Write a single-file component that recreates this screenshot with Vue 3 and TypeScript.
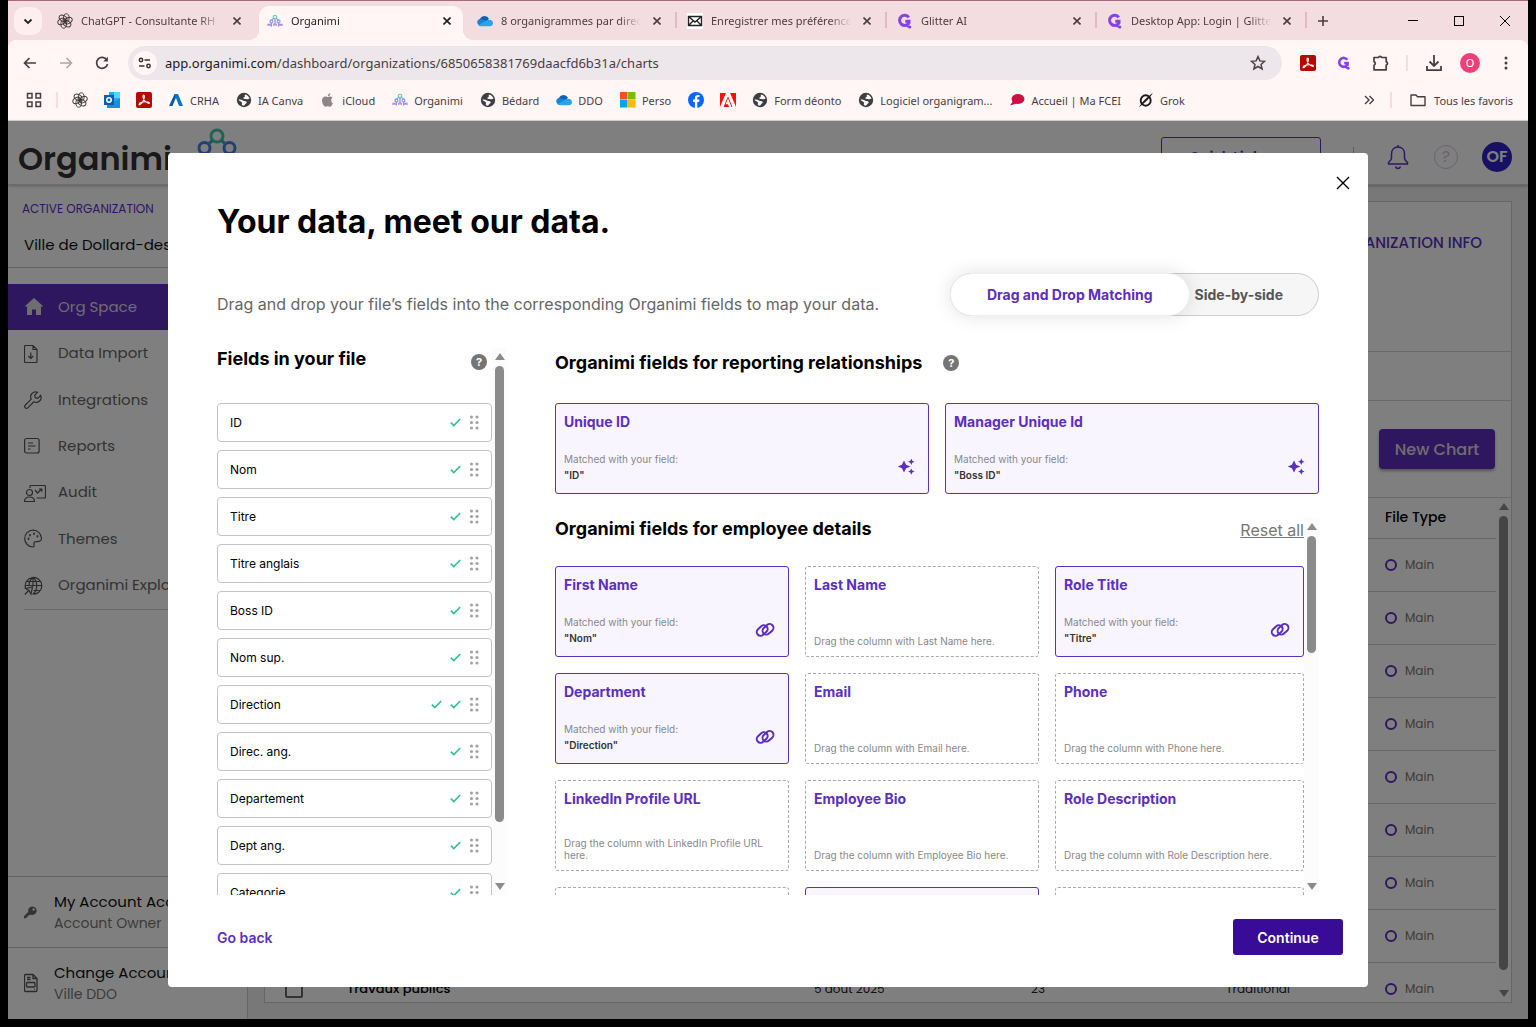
<script setup lang="ts">
interface Tab { icon: string; title: string; active?: boolean }
interface Bookmark { icon: string; label?: string }
interface NavItem { icon: string; label: string; active?: boolean }
interface FileField { name: string; checks: number }
interface TargetField { title: string; match?: string }
interface ChartRow { name: string; date: string; people: string; kind: string }

const icons: Record<string, string> = {
  gpt: '<g fill="none" stroke="#3a3335" stroke-width=".9"><ellipse cx="9.300" cy="5" rx="2.800" ry="4.200"/><ellipse cx="9.300" cy="5" rx="2.800" ry="4.200" transform="rotate(60 8 8)"/><ellipse cx="9.300" cy="5" rx="2.800" ry="4.200" transform="rotate(120 8 8)"/><ellipse cx="9.300" cy="5" rx="2.800" ry="4.200" transform="rotate(180 8 8)"/><ellipse cx="9.300" cy="5" rx="2.800" ry="4.200" transform="rotate(240 8 8)"/><ellipse cx="9.300" cy="5" rx="2.800" ry="4.200" transform="rotate(300 8 8)"/></g>',
  organimi: '<g fill="none" stroke-width="1.3"><circle cx="8" cy="4" r="1.7" stroke="#6fcfc4"/><path d="M6.6 5.2L5 7.4M9.4 5.2L11 7.4" stroke="#6fb0dc"/><circle cx="4.4" cy="8.4" r="1.4" stroke="#86a4e6"/><circle cx="11.6" cy="8.4" r="1.4" stroke="#86a4e6"/><path d="M8 5.8V11M4.4 10v2.600M11.600 10v2.600M1 13v-1.500h2V13M6.800 13v-1.800h2.400V13M13 13v-1.500h2V13M4 13h1M11 13h1" stroke="#b08ae6"/></g>',
  cloud: '<path d="M4.500 13A4 4 0 0 1 3 5.700 5 5 0 0 1 12 5.800L9 9z" fill="#0f5fb4"/><path d="M12.300 13H4A3.800 3.800 0 0 1 .8 7.300C2 6 5 5.800 7 7l5 1.500z" fill="#1484d8"/><path d="M4 13.200a3.200 3.200 0 0 1-2.500-1.200l6-3.200c2-1.300 3-2 4.700-2 2.300.2 3.800 1.500 3.800 3.400s-1.500 3-3.200 3z" fill="#28a4ea"/>',
  mail: '<path fill="#fff" d="M0 0h16v16H0z"/><path d="M1.500 3.500h13v9h-13zM1.500 3.500L8 9l6.500-5.500M1.500 12.500L6 8M14.500 12.500L10 8" fill="none" stroke="#222" stroke-width="1.400"/>',
  glitter: '<path d="M11.800 4.300A5.100 5.100 0 1 0 12 10V8.200H8.300" fill="none" stroke="#8444e0" stroke-width="3"/><circle cx="12.800" cy="14" r="1.600" fill="#8444e0"/><path d="M9 12.500l3.500 1.700" stroke="#8444e0" stroke-width="2"/>',
  outlook: '<path fill="#28a8ea" d="M5 0h11v12H5z"/><path fill="#50d9ff" d="M10 0h6v6h-6z"/><path fill="#0f6cbd" d="M5 6h5v6H5z"/><path fill="#1490df" d="M3 12l13-5v9H3z"/><path fill="#0a5fab" d="M0 3h10v10H0z"/><circle cx="5" cy="8" r="2.200" fill="none" stroke="#fff" stroke-width="1.500"/>',
  pdf: '<rect width="16" height="16" rx="2" fill="#b30b00"/><path d="M3 12.300c0-1.500 4-3 9-2.300 2 .4 1.800 1.700.4 1.300C9.500 10.500 6.500 7 7 4c.3-1.400 1.700-1 1.400.7C8 8 5.500 11.500 4 12.600c-.6.300-1 .2-1-.3z" fill="none" stroke="#fff" stroke-width="1.100"/>',
  crha: '<path fill="#fff" d="M0 0h16v16H0z"/><path d="M1 14L6.500 2h3l-5 12z" fill="#0d5aa8"/><path d="M6.500 2h3.500l5 12h-4z" fill="#0b76c8"/>',
  globe: '<circle cx="8" cy="8" r="7.200" fill="#3c4043"/><path d="M9 2.400c2.300.4 4 2 4.500 4.200-1 .8-2 .9-3 .6-.9-.3-1.600.2-2.500-.4C7 6.200 7 5.600 8.300 5.200 9.400 4.700 8.300 3.500 9 2.400zM2.500 7.500c1.700-.2 3.200 0 4.500 1 1 .8 2.500.300 3.500 1.200.8 1-.300 1.600-1 2.100-.8.600-.5 1.400-1.500 1.800-1.200.2-2-.2-2.200-1.100-.1-.8.500-1.100.1-2C5.400 9.400 3.300 9.500 2.500 7.500z" fill="#fff6f5"/>',
  apple: '<path d="M11.200 8.300c0-1.600 1.300-2.400 1.400-2.500-.8-1.100-2-1.300-2.400-1.300-1-.1-2 .6-2.500.6s-1.300-.6-2.200-.6C3.200 4.600 2 6.200 2 8.600c0 2.700 1.900 6.200 3.500 6.200.8 0 1.200-.5 2.200-.5s1.300.5 2.200.5c1.300 0 2.500-2.200 2.900-3.500-1-.4-1.600-1.500-1.600-3zM9.600 3.500c.5-.6.800-1.400.7-2.300-1.300.2-2.600 1.300-2.500 2.900.7 0 1.400-.2 1.800-.6z" fill="#8c8889"/>',
  windows: '<path fill="#f25022" d="M0 0h7.500v7.500H0z"/><path fill="#7fba00" d="M8 0h7.500v7.500H8z"/><path fill="#00a4ef" d="M0 8h7.500v7.500H0z"/><path fill="#ffb900" d="M8 8h7.500v7.500H8z"/>',
  facebook: '<circle cx="8" cy="8" r="8" fill="#0866ff"/><path d="M6.900 16V10H5V7.600h1.900V6.300c0-2.300 1.100-3.300 3.400-3.300.5 0 1 .1 1.200.1v2h-.9c-1 0-1.300.4-1.300 1.400v1.100h2.200L11.100 10H9.300v6z" fill="#fff"/>',
  adobe: '<path fill="#fa0f00" d="M0 1h16v14H0z"/><path fill="#fff" d="M5.900 1h4.200L16 15h-3.500L8 4.300 3.500 15H0zM8 6.200l3.500 8.800H9l-1-2.700H5.600z"/>',
  fcei: '<path fill="#fff" d="M0 0h16v16H0z"/><ellipse cx="9" cy="7" rx="6.500" ry="5" fill="#cf1044"/><path d="M4 9l-3 4.500 7-2z" fill="#cf1044"/>',
  grok: '<ellipse cx="7.700" cy="8.500" rx="5" ry="5.200" fill="none" stroke="#1b1b1b" stroke-width="1.900"/><path d="M.8 15.500C4 10 8 6 15 .8 12 6 7.500 10.500.8 15.500z" fill="#1b1b1b"/>',
  home: '<path d="M10 1L.5 9.500H3V18h5v-5.500h4V18h5V9.500h2.500z" fill="#ddd" stroke="none"/>',
  import: '<path d="M1.500 1.500H9l4 4v12a1 1 0 0 1-1 1H1.500a1 1 0 0 1-1-1v-15a1 1 0 0 1 1-1zM9 1.500v4h4M6.800 8.500v6M4.300 12l2.500 2.500 2.500-2.500"/>',
  wrench: '<path d="M1.200 17.800a1.800 1.800 0 0 1 0-2.600l6-6a5 5 0 0 1 6.400-6.900l-2.900 2.900.6 2.500 2.500.6 2.900-2.900a5 5 0 0 1-6.900 6.400l-6 6a1.800 1.800 0 0 1-2.600 0z"/>',
  report: '<rect x=".6" y="2.500" width="14.500" height="14.500" rx="2"/><path d="M4 7h4M4 10h7.500M4 13h2.500M8 7h1"/>',
  audit: '<circle cx="5.500" cy="9.500" r="3"/><path d="M.5 18.500c0-3 2-4.500 5-4.500s5 1.500 5 4.500zM6 5V3.500a1 1 0 0 1 1-1h13.500a1 1 0 0 1 1 1V14a1 1 0 0 1-1 1h-8M11 7l2.500 3 4-4M15 6h2.800v2.800"/>',
  palette: '<path d="M17.500 9.500A8.400 8.400 0 1 0 9 18c1.300 0 1.300-1.500 1-2.500-.500-2 .500-3 2.500-3 2.500.3 5-.5 5-3z"/><path d="M4.500 9.500v.5M6 6v.5M10 4.500V5M13.500 7v.5" stroke-width="1.800" stroke-linecap="round"/>',
  explore: '<path d="M1.500 12a8.300 8.300 0 1 1 7 6M1 9.500h16.500M2.500 5.500h13.500M9.500 14.500h6.500M9 1.300v9M9 1.300c-3 2.500-4 5-4 8.200M9 1.300c5 4 5 13 0 16.700M.8 18.500l4-4M1.500 12.500l7-1.500-1.500 7-2-3.500z"/>',
  key: '<path d="M12.300 4a5 5 0 0 0-4.800 6.400L2 15.900V18h3.200v-1.600h1.600v-1.600h1.600l1.400-1.400A5 5 0 1 0 12.300 4zm1.400 5a1.400 1.400 0 1 1 0-2.800 1.400 1.400 0 0 1 0 2.800z" transform="translate(-2 1) scale(.85)" fill="#666" stroke="none"/>',
  account: '<path d="M1.500 1.500H9l4 4v12a1 1 0 0 1-1 1H1.500a1 1 0 0 1-1-1v-15a1 1 0 0 1 1-1zM9 1.500v4h4M3 4.500h3.500M3 6.500h3.500M10 16.300h.8"/><rect x="2.500" y="9.500" width="8.500" height="4.500" rx="1"/>',
}

const tabs: Tab[] = [
  { icon: 'gpt', title: 'ChatGPT - Consultante RH' },
  { icon: 'organimi', title: 'Organimi', active: true },
  { icon: 'cloud', title: '8 organigrammes par direc' },
  { icon: 'mail', title: 'Enregistrer mes préférence' },
  { icon: 'glitter', title: 'Glitter AI' },
  { icon: 'glitter', title: 'Desktop App: Login | Glitte' },
]

const bookmarks: Bookmark[] = [
  { icon: 'gpt' },
  { icon: 'outlook' },
  { icon: 'pdf' },
  { icon: 'crha', label: 'CRHA' },
  { icon: 'globe', label: 'IA Canva' },
  { icon: 'apple', label: 'iCloud' },
  { icon: 'organimi', label: 'Organimi' },
  { icon: 'globe', label: 'Bédard' },
  { icon: 'cloud', label: 'DDO' },
  { icon: 'windows', label: 'Perso' },
  { icon: 'facebook' },
  { icon: 'adobe' },
  { icon: 'globe', label: 'Form déonto' },
  { icon: 'globe', label: 'Logiciel organigram...' },
  { icon: 'fcei', label: 'Accueil | Ma FCEI' },
  { icon: 'grok', label: 'Grok' },
]

const nav: NavItem[] = [
  { icon: 'home', label: 'Org Space', active: true },
  { icon: 'import', label: 'Data Import' },
  { icon: 'wrench', label: 'Integrations' },
  { icon: 'report', label: 'Reports' },
  { icon: 'audit', label: 'Audit' },
  { icon: 'palette', label: 'Themes' },
  { icon: 'explore', label: 'Organimi Explore' },
]

const blank: ChartRow = { name: '', date: '', people: '', kind: '' }
const rows: ChartRow[] = [
  ...Array.from({ length: 8 }, () => blank),
  { name: 'Travaux publics', date: '5 août 2025', people: '23', kind: 'Traditional' },
]

const fileFields: FileField[] = [
  { name: 'ID', checks: 1 },
  { name: 'Nom', checks: 1 },
  { name: 'Titre', checks: 1 },
  { name: 'Titre anglais', checks: 1 },
  { name: 'Boss ID', checks: 1 },
  { name: 'Nom sup.', checks: 1 },
  { name: 'Direction', checks: 2 },
  { name: 'Direc. ang.', checks: 1 },
  { name: 'Departement', checks: 1 },
  { name: 'Dept ang.', checks: 1 },
  { name: 'Categorie', checks: 1 },
]

const reporting: TargetField[] = [
  { title: 'Unique ID', match: 'ID' },
  { title: 'Manager Unique Id', match: 'Boss ID' },
]

const details: TargetField[] = [
  { title: 'First Name', match: 'Nom' },
  { title: 'Last Name' },
  { title: 'Role Title', match: 'Titre' },
  { title: 'Department', match: 'Direction' },
  { title: 'Email' },
  { title: 'Phone' },
  { title: 'LinkedIn Profile URL' },
  { title: 'Employee Bio' },
  { title: 'Role Description' },
  { title: '' },
  { title: '', match: '' },
  { title: '' },
]
</script>

<template>
  <div class="window">
    <header class="chrome">
      <div class="tabstrip">
        <button class="tab-search" aria-label="Rechercher dans les onglets">
          <svg width="10" height="10" viewBox="0 0 10 10"><path d="M1.500 3.500L5 7l3.500-3.500" fill="none" stroke="#222" stroke-width="1.800" /></svg>
        </button>
        <div v-for="(t, i) in tabs" :key="i" class="tab" :class="{ active: t.active, bar: i > 1 }">
          <svg class="i16" viewBox="0 0 16 16" v-html="icons[t.icon]"></svg>
          <span class="tab-title">{{ t.title }}</span>
          <button class="tab-close" aria-label="Fermer">
            <svg width="8" height="8" viewBox="0 0 8 8"><path d="M.5.5l7 7M7.500.5l-7 7" stroke="currentColor" stroke-width="1.600" /></svg>
          </button>
        </div>
        <button class="plain new-tab" aria-label="Nouvel onglet">
          <svg width="10" height="10" viewBox="0 0 10 10"><path d="M5 0v10M0 5h10" stroke="#4a3d40" stroke-width="1.600" /></svg>
        </button>
        <div class="win-buttons">
          <button class="plain" aria-label="Réduire"><svg width="10" height="10" viewBox="0 0 10 10"><path d="M0 4.500h10" stroke="#000" /></svg></button>
          <button class="plain" aria-label="Agrandir"><svg width="10" height="10" viewBox="0 0 10 10"><rect x=".5" y=".5" width="9" height="9" fill="none" stroke="#000" /></svg></button>
          <button class="plain" aria-label="Fermer la fenêtre"><svg width="10" height="10" viewBox="0 0 10 10"><path d="M0 0l10 10M10 0L0 10" stroke="#000" /></svg></button>
        </div>
      </div>

      <div class="toolbar">
        <button class="plain nav-btn" aria-label="Retour"><svg width="14" height="12" viewBox="0 0 14 12"><path d="M13 6H1.500M6.500 1l-5 5 5 5" fill="none" stroke="#4a3d40" stroke-width="1.700" /></svg></button>
        <button class="plain nav-btn" aria-label="Avancer"><svg width="14" height="12" viewBox="0 0 14 12"><path d="M1 6h11.500M7.500 1l5 5-5 5" fill="none" stroke="#b0a4a7" stroke-width="1.500" /></svg></button>
        <button class="plain nav-btn" aria-label="Actualiser"><svg width="14" height="14" viewBox="0 0 14 14"><path d="M11.800 4A5.500 5.500 0 1 0 12.500 8" fill="none" stroke="#4a3d40" stroke-width="1.700" /><path d="M12.900.8v4.700H8.200z" fill="#4a3d40" /></svg></button>
        <div class="address">
          <span class="site"><svg width="14" height="12" viewBox="0 0 14 12"><g fill="none" stroke="#333" stroke-width="1.500"><circle cx="3" cy="3" r="1.700" /><path d="M6.500 3H12M1 9h5.500" /><circle cx="10.500" cy="9" r="1.700" /></g></svg></span>
          <span class="url"><b>app.organimi.com</b>/dashboard/organizations/6850658381769daacfd6b31a/charts</span>
          <svg width="16" height="16" viewBox="0 0 16 16"><path d="M8 1.600l1.900 4.300 4.700.4-3.600 3.100 1.100 4.600L8 11.500 3.900 14 5 9.400 1.400 6.300l4.700-.4z" fill="none" stroke="#4a4246" stroke-width="1.500" /></svg>
        </div>
        <div class="extensions">
          <svg class="i16" viewBox="0 0 16 16" v-html="icons.pdf"></svg>
          <svg class="i14" viewBox="0 0 16 16" v-html="icons.glitter"></svg>
          <svg width="18" height="18" viewBox="0 0 18 18"><path d="M2 3.500h4.500a1.700 1.700 0 0 1 3.200 0h4.500v4.300a1.700 1.700 0 0 1 0 3.300v4.700H2v-4.500a2 2 0 0 0 0-3.700z" fill="none" stroke="#4a3d40" stroke-width="1.700" stroke-linejoin="round" /></svg>
          <i class="rule"></i>
          <svg width="18" height="18" viewBox="0 0 18 18"><path d="M9 1v10.500M4.500 7.500L9 12l4.500-4.500M2 12v4.200h14V12" fill="none" stroke="#4a3d40" stroke-width="1.800" /></svg>
          <span class="profile">O</span>
          <svg class="dots" width="4" height="16" viewBox="0 0 4 16"><circle cx="2" cy="3" r="1.500" fill="#4a3d40" /><circle cx="2" cy="8" r="1.500" fill="#4a3d40" /><circle cx="2" cy="13" r="1.500" fill="#4a3d40" /></svg>
        </div>
      </div>

      <nav class="bookmarks">
        <svg class="apps" width="16" height="16" viewBox="0 0 16 16"><path d="M1.500 1.500h4.500v4.500h-4.500zM10 1.500h4.500v4.500H10zM1.500 10h4.500v4.500h-4.500zM10 10h4.500v4.500H10z" fill="none" stroke="#4a3d40" stroke-width="1.500" /></svg>
        <i class="rule"></i>
        <a v-for="(b, i) in bookmarks" :key="i" href="#" class="bookmark">
          <svg class="i16" viewBox="0 0 16 16" v-html="icons[b.icon]"></svg>
          <span v-if="b.label">{{ b.label }}</span>
        </a>
        <svg class="more" width="10" height="10" viewBox="0 0 10 10"><path d="M1 1l4 4-4 4M5.500 1l4 4-4 4" fill="none" stroke="#4a3d40" stroke-width="1.400" /></svg>
        <i class="rule"></i>
        <a href="#" class="bookmark all">
          <svg class="i16" viewBox="0 0 16 16"><path d="M1 3h5l1.500 1.800H15v8.700H1z" fill="none" stroke="#4a3d40" stroke-width="1.400" stroke-linejoin="round" /></svg>
          <span>Tous les favoris</span>
        </a>
      </nav>
    </header>

    <div class="page">
      <div class="app">
        <header class="app-head">
          <span class="logo">Organimi</span>
          <svg class="logo-mark" width="48" height="40" viewBox="0 0 48 40"><g fill="none" stroke-width="3"><circle cx="24" cy="9" r="6" stroke="#3fc4b0" /><circle cx="11.500" cy="21" r="5.500" stroke="#4a7be0" /><circle cx="36.500" cy="21" r="5.500" stroke="#4a7be0" /><path d="M19.500 13.500L15.500 17M28.500 13.500l4 3.500" stroke="#43a5c6" /></g></svg>
          <button class="quick">Quick Links</button>
          <i class="head-rule"></i>
          <svg class="bell" width="24" height="26" viewBox="0 0 24 26"><path d="M12 1v2M12 3C8 3 5.500 6 5.500 10v4c0 2-1.500 3-3 4.500V20h19v-1.500C20 17 18.500 16 18.500 14v-4C18.500 6 16 3 12 3zM9.500 22.500c.5 1.500 1.500 2 2.500 2s2-.5 2.500-2" fill="none" stroke="#5c2fbe" stroke-width="1.500" stroke-linejoin="round" /></svg>
          <span class="head-help">?</span>
          <span class="avatar">OF</span>
        </header>

        <div class="app-body">
          <aside class="sidebar">
            <div class="org">
              <p class="org-label">ACTIVE ORGANIZATION</p>
              <p class="org-name">Ville de Dollard-des-Ormeaux</p>
            </div>
            <nav class="menu">
              <a v-for="n in nav" :key="n.label" href="#" :class="{ on: n.active }">
                <svg class="menu-icon" viewBox="0 0 22 20" fill="none" stroke="#555" stroke-width="1.200" v-html="icons[n.icon]"></svg>
                <span>{{ n.label }}</span>
              </a>
            </nav>
            <div class="side-foot">
              <div class="foot-item">
                <svg class="menu-icon" viewBox="0 0 22 20" v-html="icons.key"></svg>
                <div><p>My Account Access</p><small>Account Owner</small></div>
              </div>
              <div class="foot-item">
                <svg class="menu-icon" viewBox="0 0 22 20" fill="none" stroke="#555" stroke-width="1.300" v-html="icons.account"></svg>
                <div><p>Change Account</p><small>Ville DDO</small></div>
              </div>
            </div>
          </aside>

          <main class="main">
            <section class="panel">
              <div class="panel-top"><a href="#">ORGANIZATION INFO</a></div>
              <div class="panel-tabs"></div>
              <div class="panel-actions"><button>New Chart</button></div>
              <div class="table-wrap">
                <div class="table-clip">
                  <table>
                    <colgroup><col class="c-check"><col><col class="c-date"><col class="c-num"><col class="c-kind"><col class="c-type"></colgroup>
                    <thead>
                      <tr><th></th><th></th><th></th><th></th><th></th><th>File Type</th></tr>
                    </thead>
                    <tbody>
                      <tr v-for="(r, i) in rows" :key="i">
                        <td class="check"><input type="checkbox" :aria-label="r.name || 'Ligne'"></td>
                        <td class="name">{{ r.name }}</td>
                        <td>{{ r.date }}</td>
                        <td>{{ r.people }}</td>
                        <td>{{ r.kind }}</td>
                        <td class="type"><span><i></i>Main</span></td>
                      </tr>
                    </tbody>
                  </table>
                </div>
                <div class="scroll"><i class="up"></i><i class="thumb"></i><i class="down"></i></div>
              </div>
            </section>
          </main>
        </div>
      </div>

      <div class="overlay">
        <section class="modal" role="dialog" aria-labelledby="dialog-title">
          <button class="close plain" aria-label="Close"><svg width="14" height="14" viewBox="0 0 14 14"><path d="M1 1l12 12M13 1L1 13" stroke="#000" stroke-width="1.400" /></svg></button>
          <h1 id="dialog-title">Your data, meet our data.</h1>
          <div class="intro">
            <p>Drag and drop your file’s fields into the corresponding Organimi fields to map your data.</p>
            <div class="switch">
              <button class="chosen">Drag and Drop Matching</button>
              <button>Side-by-side</button>
            </div>
          </div>

          <div class="mapping">
            <div class="source">
              <div class="source-list">
                <div class="source-head">
                  <h2>Fields in your file</h2>
                  <span class="help">?</span>
                </div>
                <ul>
                  <li v-for="f in fileFields" :key="f.name">
                    <span>{{ f.name }}</span>
                    <svg v-for="c in f.checks" :key="c" class="tick" width="11" height="9" viewBox="0 0 11 9"><path d="M.8 4.600l3 3L10.200 1" fill="none" stroke="#2fbf93" stroke-width="1.600" /></svg>
                    <svg class="grip" width="10" height="15" viewBox="0 0 10 15" fill="#a3a3a3"><circle cx="2.500" cy="2" r="1.600" /><circle cx="8" cy="2" r="1.600" /><circle cx="2.500" cy="7.500" r="1.600" /><circle cx="8" cy="7.500" r="1.600" /><circle cx="2.500" cy="13" r="1.600" /><circle cx="8" cy="13" r="1.600" /></svg>
                  </li>
                </ul>
              </div>
              <div class="scroll"><i class="up"></i><i class="thumb"></i><i class="down"></i></div>
            </div>

            <div class="target">
              <div class="target-head">
                <h2>Organimi fields for reporting relationships</h2>
                <span class="help">?</span>
              </div>
              <div class="pair">
                <article v-for="f in reporting" :key="f.title" class="slot matched">
                  <h3>{{ f.title }}</h3>
                  <p>Matched with your field:<b>"{{ f.match }}"</b></p>
                  <svg width="18" height="18" viewBox="0 0 18 18" fill="#5c2fbe"><path d="M7 3.500l2.100 4.300 4.400 1.700-4.400 1.700L7 15.500l-2.100-4.300L.8 9.500l4.100-1.700zM14.300 1.500l1 2.200 2.200 1-2.200 1-1 2.200-1-2.200-2.200-1 2.200-1zM14.300 11.400l1 2.200 2.200 1-2.200 1-1 2.200-1-2.200-2.200-1 2.200-1z" /></svg>
                </article>
              </div>
              <div class="details">
                <div class="details-list">
                  <div class="details-head">
                    <h2>Organimi fields for employee details</h2>
                    <a href="#">Reset all</a>
                  </div>
                  <div class="grid">
                    <article v-for="(f, i) in details" :key="i" class="slot" :class="{ matched: f.match !== undefined }">
                      <h3>{{ f.title }}</h3>
                      <template v-if="f.match">
                        <p>Matched with your field:<b>"{{ f.match }}"</b></p>
                        <svg width="20" height="16" viewBox="0 0 20 16" fill="none" stroke="#5c2fbe" stroke-width="2"><rect x="1.200" y="4.700" width="12" height="7.600" rx="3.800" transform="rotate(-42 7.200 8.500)" /><rect x="7" y="3.500" width="12" height="7.600" rx="3.800" transform="rotate(-42 13 7.300)" /></svg>
                      </template>
                      <p v-else-if="f.title" class="hint">Drag the column with {{ f.title }} here.</p>
                    </article>
                  </div>
                </div>
                <div class="scroll short"><i class="up"></i><i class="thumb"></i><i class="down"></i></div>
              </div>
            </div>
          </div>

          <footer class="modal-foot">
            <button class="back plain">Go back</button>
            <button class="continue">Continue</button>
          </footer>
        </section>
      </div>
    </div>
  </div>
</template>

<style>
body {
  margin: 0;
  background: #000;
}
</style>

<style scoped>
* { box-sizing: border-box; }
h1, h2, h3, p, ul { margin: 0; padding: 0; }
a { text-decoration: none; color: inherit; }
button { font: inherit; cursor: pointer; }
svg { flex: none; display: block; }
.plain { border: 0; background: none; padding: 0; display: flex; align-items: center; justify-content: center; }
.i16 { width: 16px; height: 16px; }
.i14 { width: 14px; height: 14px; }

.window {
  display: flex;
  flex-direction: column;
  height: calc(100vh - 8px);
  margin: 0 8px;
  overflow: hidden;
}

/* Browser frame */
.chrome {
  flex: none;
  background: #f3dde0;
  border-top: 1px solid #a86c7a;
  border-bottom: 1px solid #dcd5d5;
  font-family: "Noto Sans", "Open Sans", sans-serif;
  font-size: 11px;
  color: #4a3d40;
}
.tabstrip { display: flex; align-items: center; height: 39px; padding-left: 6px; }
.tab-search { width: 28px; height: 28px; margin-right: 7px; border: 0; border-radius: 10px; background: #ffeef0; display: flex; align-items: center; justify-content: center; padding: 0; }
.tab { position: relative; display: flex; align-items: center; flex: 0 1 210px; min-width: 0; height: 34px; margin-top: 5px; padding: 0 18px 5px 8px; }
.tab.bar::after { content: ""; position: absolute; right: 2px; top: 6px; width: 2px; height: 16px; background: #e0bcc2; }
.tab.active { color: #201a1b; }
.tab.active::before { content: ""; position: absolute; inset: 0 6px 0 0; background: #fff6f5; border-radius: 10px 10px 0 0; }
.tab.active > * { position: relative; }
.tab.active::after { content: ""; position: absolute; left: -10px; right: -4px; bottom: 0; height: 10px; background: radial-gradient(circle at 0 0, #fff6f500 10px, #fff6f5 10px) left / 10px 10px no-repeat, radial-gradient(circle at 100% 0, #fff6f500 10px, #fff6f5 10px) right / 10px 10px no-repeat; }
.tab-title { flex: 1; margin: 0 12px 0 8px; overflow: hidden; white-space: nowrap; mask-image: linear-gradient(90deg, #000 calc(100% - 22px), transparent); }
.tab-close { display: flex; padding: 0; border: 0; background: none; color: inherit; }
.new-tab { width: 28px; }
.win-buttons { display: flex; margin-left: auto; }
.win-buttons button { width: 46px; height: 39px; }
.toolbar { display: flex; align-items: center; height: 46px; padding: 0 20px 0 4px; background: #fff6f5; border-radius: 8px 8px 0 0; }
.nav-btn { width: 36px; height: 34px; }
.address { flex: 1; display: flex; align-items: center; height: 34px; margin-left: 8px; padding: 0 16px 0 5px; border-radius: 17px; background: #ede7eb; font-size: 13px; }
.site { display: flex; align-items: center; justify-content: center; width: 24px; height: 24px; border-radius: 50%; background: #fff6f5; }
.url { flex: 1; margin-left: 8px; }
.url b { font-weight: 400; color: #201a1b; }
.extensions { display: flex; align-items: center; gap: 21px; margin-left: 18px; }
.rule { width: 2px; height: 16px; background: #fbdbe0; }
.extensions .rule { margin: 0 -4px 0 -5px; }
.profile { width: 20px; height: 20px; margin: 0 3px 0 -4px; border-radius: 50%; background: #ec407a; color: #fff; line-height: 20px; text-align: center; }
.bookmarks { display: flex; align-items: center; height: 34px; padding: 0 14px 6px 18px; background: #fff6f5; }
.apps { margin-right: 14px; }
.bookmarks > .rule + .bookmark { margin-left: 6px; }
.bookmark { display: flex; align-items: center; gap: 6px; padding: 0 8px; white-space: nowrap; }
.bookmark span { padding-right: 1px; }
.more { margin: 0 16px 0 auto; }
.bookmarks > .rule + .bookmark.all { gap: 8px; padding-right: 0; margin-left: 10px; }

/* Application behind the dialog */
.page { position: relative; flex: 1; min-height: 0; background: #fff; font-family: Poppins, Inter, "Liberation Sans", sans-serif; }
.app { display: flex; flex-direction: column; height: 100%; }
.app-head { position: relative; display: flex; align-items: center; flex: none; height: 64px; padding: 8px 16px 0 10px; border-bottom: 1px solid #d8d8d8; box-shadow: 0 1px 3px #0004; z-index: 1; }
.logo { padding-top: 4px; font-size: 32px; font-weight: 600; line-height: 44px; color: #333; }
.logo-mark { align-self: flex-start; margin: -2px 0 0 21px; }
.quick { align-self: flex-start; width: 160px; height: 40px; margin: 8px 0 0 auto; border: 1px solid #5c2fbe; border-radius: 3px; background: none; color: #5c2fbe; font-size: 14px; font-weight: 600; padding: 0 24px 0 0; }
.head-rule { width: 1px; height: 20px; margin: 0 32px; background: #bbb; }
.head-help { width: 24px; height: 24px; margin: 0 24px; border: 1px solid #cfc8dd; border-radius: 50%; color: #cfc8dd; font-size: 16px; line-height: 22px; text-align: center; }
.avatar { width: 30px; height: 30px; border-radius: 50%; background: #3020c8; color: #fff; font-size: 16px; font-weight: 600; line-height: 30px; text-align: center; }
.app-body { display: flex; flex: 1; min-height: 0; }
.sidebar { display: flex; flex-direction: column; flex: none; width: 240px; border-right: 1px solid #ccc; }
.org { height: 83px; padding: 16px 0 0 14px; border-bottom: 1px solid #c6c6c6; }
.org-label { font-size: 12px; line-height: 16px; color: #5c2fbe; }
.org-name { margin: 18px 0 0 2px; font-size: 15px; line-height: 20px; color: #111; white-space: nowrap; }
.menu { display: flex; flex-direction: column; height: 326px; margin-top: 16px; }
.menu a { flex: 1; display: flex; align-items: center; padding-left: 16px; font-size: 15px; color: #666; white-space: nowrap; }
.menu a span { padding-bottom: 2px; }
.menu a.on { background: #5c2fbe; color: #ddd; }
.menu::after { content: ""; height: 1px; margin-left: 16px; background: #d0d0d0; }
.menu-icon { width: 22px; height: 20px; margin-right: 12px; }
.side-foot { margin-top: auto; padding-bottom: 1px; }
.foot-item { display: flex; align-items: center; height: 71px; padding-left: 16px; border-top: 1px solid #c6c6c6; color: #111; white-space: nowrap; }
.foot-item .menu-icon { margin-right: 8px; }
.foot-item p { font-size: 15px; line-height: 22px; }
.foot-item small { display: block; font-size: 14px; line-height: 20px; color: #777; }
.main { flex: 1; min-width: 0; padding: 16px; background: #f0f0f0; }
.panel { display: flex; flex-direction: column; height: 100%; border: 1px solid #ccc; background: #fff; overflow: hidden; }
.panel-top { flex: none; height: 150px; padding: 31px 29px 0; text-align: right; font-size: 15px; line-height: 20px; font-weight: 500; color: #5c2fbe; border-bottom: 1px solid #d4d4d4; }
.panel-tabs { flex: none; height: 49px; border-bottom: 1px solid #d4d4d4; }
.panel-actions { flex: none; display: flex; justify-content: flex-end; align-items: center; height: 97px; padding: 0 16px; border-bottom: 1px solid #d4d4d4; }
.panel-actions button { height: 40px; width: 116px; border: 0; border-radius: 4px; background: #5c2fbe; color: #ddd; font-size: 16px; font-weight: 500; padding: 0; box-shadow: 0 2px 3px #0005; }
.table-wrap { display: flex; flex: 1; min-height: 0; }
.table-clip { flex: 1; overflow: hidden; }
table { width: 100%; table-layout: fixed; border-collapse: collapse; font-size: 12px; color: #222; }
.c-check { width: 70px; }
.c-date { width: 217px; }
.c-num { width: 195px; }
.c-kind { width: 159px; }
.c-type { width: 123px; }
th { height: 40px; padding: 0 12px; text-align: left; font-size: 14px; font-weight: 500; color: #000; border-bottom: 1px solid #ccc; }
td { height: 53px; padding: 0 12px; border-bottom: 1px solid #ccc; }
td.check { padding-left: 20px; }
td.check input { appearance: none; display: block; width: 18px; height: 18px; margin: 0; border: 2px solid #666; border-radius: 2px; }
td.name { font-size: 13px; font-weight: 500; color: #000; }
td.type { color: #777; }
td.type span { display: flex; align-items: center; gap: 8px; }
td.type i { width: 12px; height: 12px; border: 2px solid #5c2fbe; border-radius: 50%; }

/* Scroll bars */
.scroll { flex: none; display: flex; flex-direction: column; align-items: center; width: 15px; padding: 5px 0; background: #fcfcfc; }
.up, .down { flex: none; border: 5px solid transparent; }
.up { border-top: 0; border-bottom: 7px solid #8b8b8b; }
.down { margin-top: auto; border-bottom: 0; border-top: 7px solid #8b8b8b; }
.thumb { width: 9px; height: 85%; margin-top: 6px; border-radius: 5px; background: #8b8b8b; }
.table-wrap .thumb { height: 92%; }
.short .thumb { height: 32%; }

/* Dialog */
.overlay { position: absolute; inset: 0; z-index: 2; display: flex; justify-content: center; padding: 32px; background: #00000080; }
.modal { position: relative; display: flex; flex-direction: column; flex: 1; max-width: 1200px; padding: 49px 49px 32px; border-radius: 4px; background: #fff; color: #000; font-family: Inter, "Liberation Sans", sans-serif; }
.close { position: absolute; top: 15px; right: 10px; width: 30px; height: 30px; }
h1 { font-size: 32px; line-height: 40px; font-weight: 700; }
h2 { font-size: 18px; line-height: 22px; font-weight: 700; }
.intro { display: flex; align-items: center; justify-content: space-between; margin-top: 31px; }
.intro p { padding-top: 19px; font-size: 16px; line-height: 24px; color: #666; }
.switch { display: flex; height: 43px; border: 1px solid #ccc; border-radius: 22px; background: #f6f6f6; }
.switch button { height: 41px; padding: 0 35px 0 6px; border: 0; border-radius: 22px; background: none; color: #555; font-size: 14px; font-weight: 700; }
.switch .chosen { padding: 0 36px; background: #fff; color: #5c2fbe; box-shadow: 0 0 0 1px #eee, 0 0 20px #0002; }
.mapping { display: flex; gap: 48px; flex: 1; min-height: 0; margin-top: 32px; }
.source { display: flex; flex: none; width: 290px; overflow: hidden; }
.source-list { flex: 1; }
.source-head { display: flex; align-items: center; justify-content: space-between; height: 28px; margin-bottom: 27px; padding-right: 5px; }
.source-head h2 { padding-bottom: 6px; }
.help { flex: none; width: 16px; height: 16px; border-radius: 50%; background: #757575; color: #fff; font-size: 11px; font-weight: 700; line-height: 16px; text-align: center; }
.source ul { display: flex; flex-direction: column; gap: 8px; list-style: none; }
.source li { display: flex; align-items: center; height: 39px; padding: 0 12px; border: 1px solid #c4c4c4; border-radius: 4px; font-size: 12px; flex: none; }
.source li span { margin-right: auto; }
.tick { margin-left: 8px; }
.grip { margin-left: 8px; }
.target { display: flex; flex-direction: column; flex: 1; min-width: 0; }
.target-head { display: flex; align-items: center; gap: 21px; height: 30px; margin-bottom: 25px; }
.pair { display: grid; grid-template-columns: 1fr 1fr; gap: 16px; }
.slot { position: relative; display: flex; flex-direction: column; height: 91px; padding: 8px 8px 9px; border: 1px dashed #aaa; border-radius: 3px; }
.slot.matched { padding-bottom: 10px; border: 1px solid #5c2fbe; background: #f8f5ff; }
h3 { font-size: 14px; line-height: 20px; font-weight: 700; color: #5c2fbe; }
.slot p { margin-top: auto; font-size: 10px; line-height: 16px; color: #888; }
.slot .hint { line-height: 12px; }
.slot b { display: block; font-weight: 600; color: #333; }
.slot svg { position: absolute; right: 13px; bottom: 18px; }
.details { display: flex; flex: 1; min-height: 0; margin-top: 24px; overflow: hidden; }
.details-list { flex: 1; }
.details-head { display: flex; align-items: center; justify-content: space-between; height: 22px; margin-bottom: 26px; }
.details-head a { padding-top: 2px; font-size: 16px; color: #777; text-decoration: underline; }
.grid { display: grid; grid-template-columns: 234fr 234fr 249fr; gap: 16px; }
.modal-foot { display: flex; align-items: center; justify-content: space-between; margin: 24px -24px 0 0; font-size: 14px; font-weight: 600; }
.back { color: #5c2fbe; }
.continue { width: 110px; height: 36px; border: 0; border-radius: 3px; background: #380c96; color: #fff; padding: 0; }
</style>
